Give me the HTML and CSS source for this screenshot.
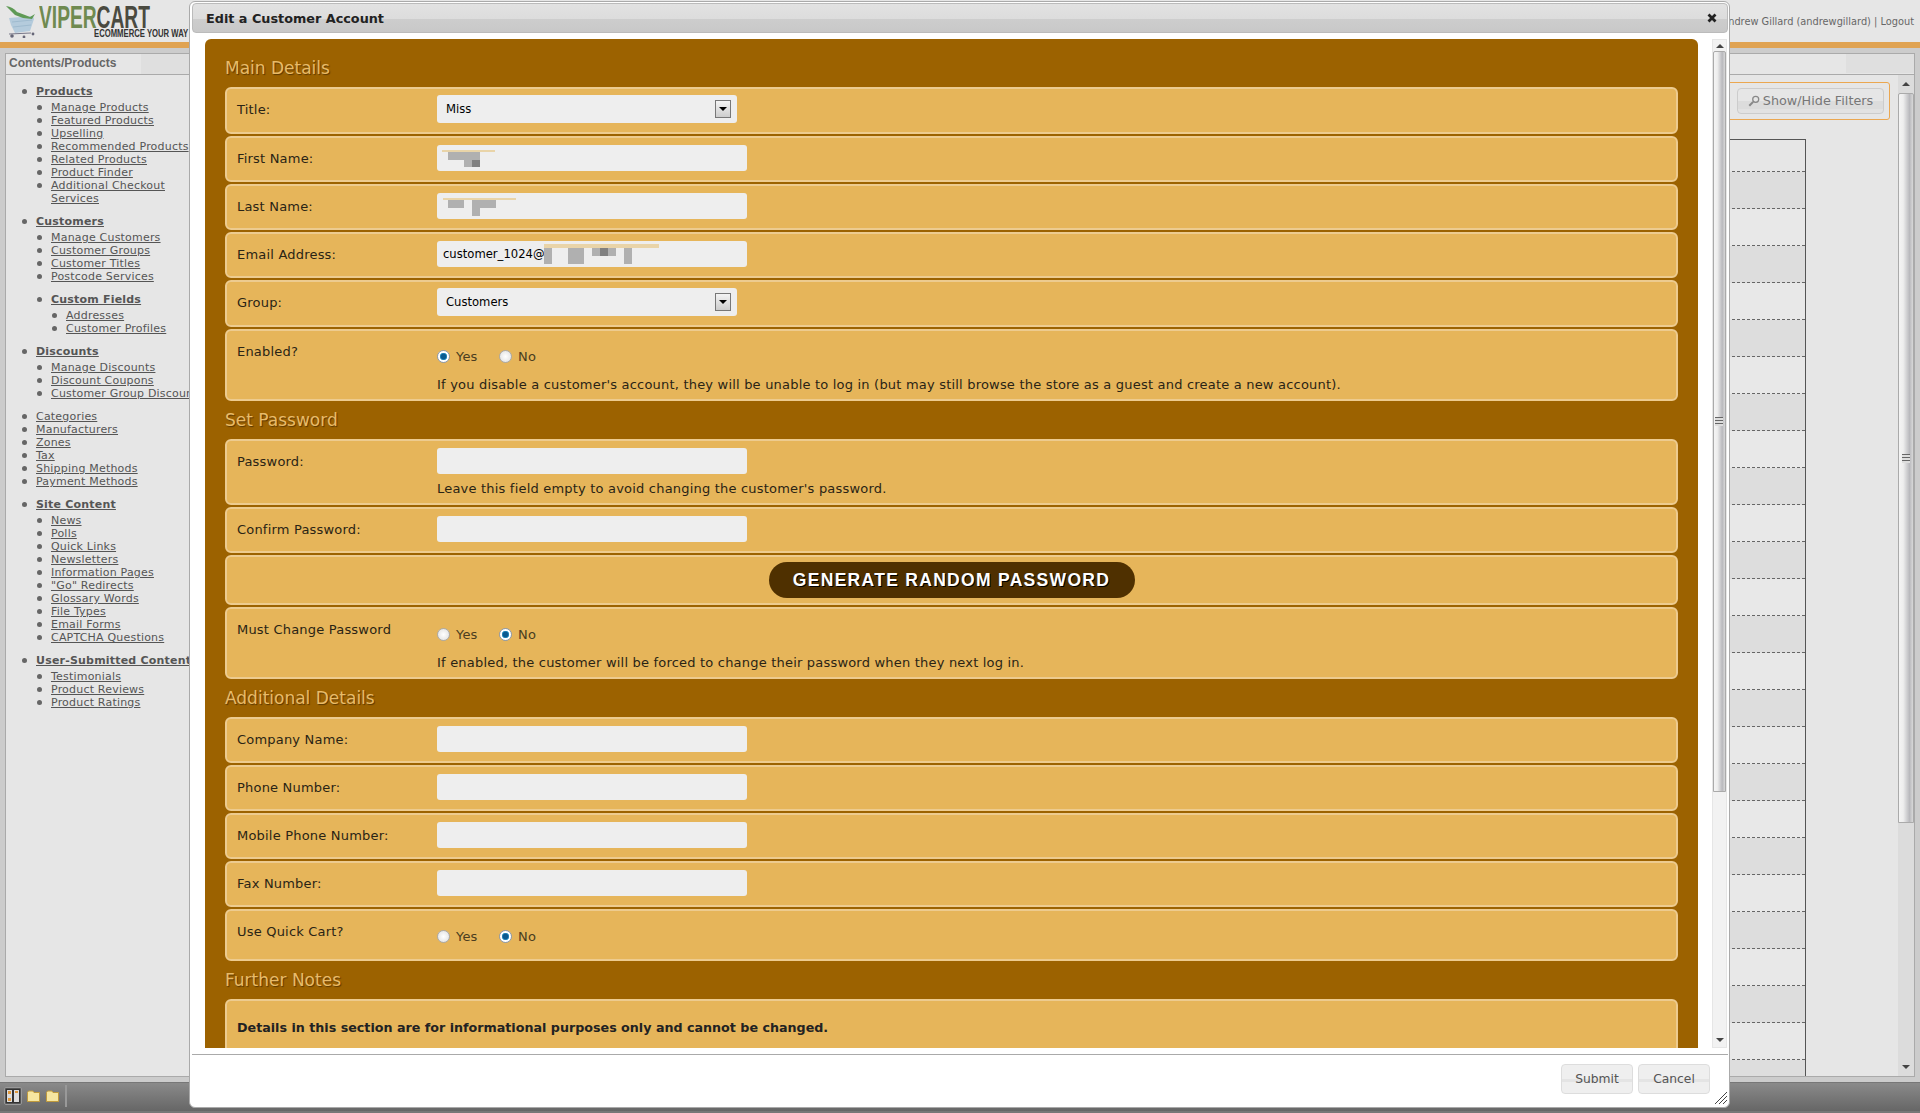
FILE: index.html
```html
<!DOCTYPE html>
<html lang="en">
<head>
<meta charset="utf-8">
<title>Edit a Customer Account</title>
<link rel="stylesheet" href="styles.css">
</head>
<body>
<header class="top">
  <div class="logo">
    <svg class="cart" width="31" height="33" viewBox="0 0 31 33">
      <path d="M4 13 L28 11 L29 14 L25 26 L10 28 L6 20Z" fill="#b4cbdc"/>
      <path d="M7 17 L27 15 M8 22 L26 20" stroke="#9fbbcf" fill="none"/>
      <path d="M1 1 Q8 2 12 7 L20 10 L25 12 L30 9 L27 14 L18 13 L10 10 Q6 6 1 1Z" fill="#5f9a55"/>
      <path d="M4 29 L26 28" stroke="#778" stroke-width="1.2"/>
      <circle cx="7" cy="31" r="1.8" fill="#667"/><circle cx="19" cy="32" r="1.4" fill="#667"/><circle cx="28" cy="29" r="1.4" fill="#667"/>
    </svg>
    <div class="wordmark">
      <div class="brand"><span class="brand-a">VIPER</span><span class="brand-b">CART</span></div>
      <div class="tag">ECOMMERCE YOUR WAY</div>
    </div>
  </div>
  <div class="user">Andrew Gillard (andrewgillard) | Logout</div>
</header>
<div class="stripe"></div>
<main class="work">
  <aside class="side">
    <div class="tabs"><div class="tab">Contents/Products</div></div>
    <nav class="nav">
      <ul class="l1">
        <li class="grp"><a class="b" href="#">Products</a>
          <ul class="l2">
            <li><a href="#">Manage Products</a></li><li><a href="#">Featured Products</a></li><li><a href="#">Upselling</a></li><li><a href="#">Recommended Products</a></li><li><a href="#">Related Products</a></li><li><a href="#">Product Finder</a></li><li><a href="#">Additional Checkout Services</a></li>
          </ul>
        </li>
        <li class="grp"><a class="b" href="#">Customers</a>
          <ul class="l2">
            <li><a href="#">Manage Customers</a></li><li><a href="#">Customer Groups</a></li><li><a href="#">Customer Titles</a></li><li><a href="#">Postcode Services</a></li>
            <li class="nest"><a class="b" href="#">Custom Fields</a>
              <ul class="l2"><li><a href="#">Addresses</a></li><li><a href="#">Customer Profiles</a></li></ul>
            </li>
          </ul>
        </li>
        <li class="grp"><a class="b" href="#">Discounts</a>
          <ul class="l2"><li><a href="#">Manage Discounts</a></li><li><a href="#">Discount Coupons</a></li><li><a href="#">Customer Group Discounts</a></li></ul>
        </li>
        <li><a href="#">Categories</a></li><li><a href="#">Manufacturers</a></li><li><a href="#">Zones</a></li><li><a href="#">Tax</a></li><li><a href="#">Shipping Methods</a></li>
        <li class="grp"><a href="#">Payment Methods</a></li>
        <li class="grp"><a class="b" href="#">Site Content</a>
          <ul class="l2"><li><a href="#">News</a></li><li><a href="#">Polls</a></li><li><a href="#">Quick Links</a></li><li><a href="#">Newsletters</a></li><li><a href="#">Information Pages</a></li><li><a href="#">"Go" Redirects</a></li><li><a href="#">Glossary Words</a></li><li><a href="#">File Types</a></li><li><a href="#">Email Forms</a></li><li><a href="#">CAPTCHA Questions</a></li></ul>
        </li>
        <li class="grp"><a class="b" href="#">User-Submitted Content</a>
          <ul class="l2"><li><a href="#">Testimonials</a></li><li><a href="#">Product Reviews</a></li><li><a href="#">Product Ratings</a></li></ul>
        </li>
      </ul>
    </nav>
  </aside>
  <section class="main">
    <div class="tabs tabs-main"><div class="tab-end"></div></div>
    <div class="main-body">
      <div class="main-content">
        <div class="filterbox"><button class="filterbtn" type="button">
          <svg width="12" height="12" viewBox="0 0 14 14"><circle cx="9" cy="5" r="3.5" fill="none" stroke="#888" stroke-width="1.5"/><path d="M6 8 L1.5 12.5" stroke="#888" stroke-width="2.4"/></svg>
          Show/Hide Filters</button></div>
        <div class="grid">
          <div class="grid-head"></div>
          <div class="r"></div><div class="r"></div><div class="r"></div><div class="r"></div><div class="r"></div><div class="r"></div><div class="r"></div><div class="r"></div><div class="r"></div><div class="r"></div><div class="r"></div><div class="r"></div><div class="r"></div><div class="r"></div><div class="r"></div><div class="r"></div><div class="r"></div><div class="r"></div><div class="r"></div><div class="r"></div><div class="r"></div><div class="r"></div><div class="r"></div><div class="r"></div><div class="r"></div>
        </div>
      </div>
      <div class="sb sb-page">
        <div class="sb-up"></div>
        <div class="sb-thumb sb-thumb-page"><span class="grip"></span></div>
        <div class="sb-down"></div>
      </div>
    </div>
  </section>
</main>
<footer class="taskbar">
  <div class="layout-ico"><svg width="14" height="14" viewBox="0 0 14 14"><rect x=".5" y=".5" width="6" height="13" fill="#ddd" stroke="#333"/><rect x="7.5" y=".5" width="6" height="13" fill="#ddd" stroke="#333"/><rect x="2" y="2" width="3" height="3" fill="#e0983a"/><rect x="2" y="9" width="3" height="3" fill="#e0983a"/><rect x="9" y="2" width="3" height="2" fill="#e0983a"/></svg></div>
  <svg class="folder" width="13" height="12" viewBox="0 0 13 12"><path d="M.5 2.5 L1.5 1 H6 L7 2.5 H12.5 V11.5 H.5Z" fill="#f6e6a0" stroke="#c09a3c"/></svg>
  <svg class="folder" width="13" height="12" viewBox="0 0 13 12"><path d="M.5 2.5 L1.5 1 H6 L7 2.5 H12.5 V11.5 H.5Z" fill="#f6e6a0" stroke="#c09a3c"/></svg>
  <div class="task-sep"></div>
</footer>

<div class="modal" role="dialog">
  <div class="m-title"><span>Edit a Customer Account</span>
    <svg width="10" height="10" viewBox="0 0 10 10"><path d="M1.5 1.5 L8.5 8.5 M8.5 1.5 L1.5 8.5" stroke="#222" stroke-width="2.8"/></svg>
  </div>
  <div class="m-body">
    <div class="panel">
      <h2 class="sec first">Main Details</h2>
      <div class="row sel-row"><label>Title:</label><div class="selwrap"><select><option>Miss</option></select><span class="selbtn"></span></div></div>
      <div class="row"><label>First Name:</label><div class="fld"><input type="text"><svg class="mask" width="120" height="26"><rect x="5" y="5" width="53" height="2" fill="#e9d4a8"/><rect x="11" y="7" width="32" height="8" fill="#b0b0b0"/><rect x="27" y="15" width="16" height="7" fill="#b0b0b0"/><rect x="35" y="15" width="8" height="7" fill="#808080"/></svg></div></div>
      <div class="row"><label>Last Name:</label><div class="fld"><input type="text"><svg class="mask" width="120" height="26"><rect x="6" y="5" width="73" height="2" fill="#e9d4a8"/><rect x="11" y="7" width="16" height="8" fill="#b0b0b0"/><rect x="35" y="7" width="24" height="8" fill="#b0b0b0"/><rect x="35" y="15" width="8" height="8" fill="#b0b0b0"/></svg></div></div>
      <div class="row"><label>Email Address:</label><div class="fld"><input type="text" value="customer_1024@"><svg class="mask" width="240" height="26"><rect x="107" y="3" width="115" height="4" fill="#e9d4a8"/><rect x="107" y="7" width="8" height="16" fill="#b0b0b0"/><rect x="131" y="7" width="16" height="16" fill="#b0b0b0"/><rect x="155" y="7" width="24" height="8" fill="#b0b0b0"/><rect x="163" y="7" width="8" height="8" fill="#808080"/><rect x="187" y="7" width="8" height="16" fill="#b0b0b0"/></svg></div></div>
      <div class="row sel-row"><label>Group:</label><div class="selwrap"><select><option>Customers</option></select><span class="selbtn"></span></div></div>
      <div class="row stack"><label>Enabled?</label><div class="ctl">
        <div class="radios"><label class="opt"><input class="radio" type="radio" name="en" checked>Yes</label><label class="opt"><input class="radio" type="radio" name="en">No</label></div>
        <p class="desc desc-r">If you disable a customer's account, they will be unable to log in (but may still browse the store as a guest and create a new account).</p>
      </div></div>

      <h2 class="sec">Set Password</h2>
      <div class="row stack"><label>Password:</label><div class="ctl"><input type="password"><p class="desc">Leave this field empty to avoid changing the customer's password.</p></div></div>
      <div class="row"><label>Confirm Password:</label><div class="fld"><input type="password"></div></div>
      <div class="row gen"><button class="genbtn" type="button">GENERATE RANDOM PASSWORD</button></div>
      <div class="row stack"><label>Must Change Password</label><div class="ctl">
        <div class="radios"><label class="opt"><input class="radio" type="radio" name="mc">Yes</label><label class="opt"><input class="radio" type="radio" name="mc" checked>No</label></div>
        <p class="desc desc-r">If enabled, the customer will be forced to change their password when they next log in.</p>
      </div></div>

      <h2 class="sec">Additional Details</h2>
      <div class="row"><label>Company Name:</label><div class="fld"><input type="text"></div></div>
      <div class="row"><label>Phone Number:</label><div class="fld"><input type="text"></div></div>
      <div class="row"><label>Mobile Phone Number:</label><div class="fld"><input type="text"></div></div>
      <div class="row"><label>Fax Number:</label><div class="fld"><input type="text"></div></div>
      <div class="row stack"><label>Use Quick Cart?</label><div class="ctl">
        <div class="radios radios-last"><label class="opt"><input class="radio" type="radio" name="qc">Yes</label><label class="opt"><input class="radio" type="radio" name="qc" checked>No</label></div>
      </div></div>

      <h2 class="sec">Further Notes</h2>
      <div class="row note"><strong>Details in this section are for informational purposes only and cannot be changed.</strong></div>
    </div>
    <div class="sb sb-modal">
      <div class="sb-up"></div>
      <div class="sb-thumb sb-thumb-modal"><span class="grip"></span></div>
      <div class="sb-down"></div>
    </div>
  </div>
  <div class="m-foot">
    <button class="btn" type="button">Submit</button><button class="btn" type="button">Cancel</button>
    <svg class="resize" width="12" height="12" viewBox="0 0 12 12"><path d="M0 12 L12 0 M4 12 L12 4 M8 12 L12 8" stroke="#444" fill="none"/></svg>
  </div>
</div>
</body>
</html>
```
FILE: styles.css
```css
* { box-sizing: border-box; }
html, body { margin: 0; height: 100%; }
body {
  height: 1113px; overflow: hidden; display: flex; flex-direction: column;
  background: #ccc; font: 11px/13px "DejaVu Sans", Verdana, sans-serif; color: #555;
}
a { color: #555; }

/* page header */
.top { height: 42px; background: #e6e6e6; display: flex; justify-content: space-between; flex: none; }
.logo { display: flex; padding: 5px 0 0 5px; width: 190px; }
.wordmark { margin-left: 3px; width: 150px; }
.brand {
  font: bold 32px/24px "Liberation Sans", Arial, sans-serif; transform: scaleX(.6); transform-origin: 0 0;
  white-space: nowrap; width: 190px; height: 24px; overflow: visible;
}
.brand-a { color: #6f8a50; }
.brand-b { color: #4a4a40; }
.tag {
  font: bold 11px/9px "Liberation Sans", Arial, sans-serif; color: #333; white-space: nowrap;
  margin: 0 0 0 55px; transform: scaleX(.7); transform-origin: 0 0;
}
.user { padding: 16px 6px 0 0; color: #666; font-size: 9.8px; line-height: 12px; }
.stripe { height: 6px; background: #e0a352; flex: none; }

/* workspace */
.work { flex: 1; display: flex; padding: 5px; min-height: 0; }
.side, .main { background: #e6e6e6; border: 1px solid #aaa; overflow: hidden; }
.side { width: 250px; flex: none; }
.main { flex: 1; display: flex; flex-direction: column; }
.tabs { height: 21px; background: #dfdfdf; border-bottom: 1px solid #aaa; flex: none; display: flex; }
.tab { width: 135px; background: #e6e6e6; padding: 3px 0 0 3px; font: bold 12px/13px "Liberation Sans", Arial, sans-serif; color: #666; }
.tabs-main { background: #e6e6e6; justify-content: flex-end; }
.tab-end { width: 68px; background: #dfdfdf; height: 19px; }

/* navigation */
.nav { padding: 10px 0 0; }
.nav ul { list-style: none; margin: 0; padding: 0; }
.l1 > li, .l2 > li { position: relative; white-space: nowrap; }
.l1 > li { padding-left: 30px; }
.nav .l2 { margin-top: 3px; }
.l2 > li { padding-left: 15px; white-space: normal; width: 172px; }
.l2 .l2 > li { width: 160px; }
.nav li::before {
  content: ""; position: absolute; width: 5px; height: 5px; border-radius: 50%; background: #666; top: 4px; left: 0;
}
.l1 > li::before { left: 16px; }
.l2 > li::before { left: 1px; }
.grp { margin-bottom: 10px; }
.nest { margin-top: 10px; }
.b { font-weight: bold; }
.nav a { letter-spacing: .2px; }

/* page main area */
.main-body { flex: 1; display: flex; min-height: 0; }
.main-content { flex: 1; min-width: 0; padding: 7px 8px 0 0; display: flex; flex-direction: column; align-items: flex-end; }
.filterbox { width: 100%; height: 38px; border: 1px solid #eba750; border-radius: 3px; padding: 5px 5px 0 0; display: flex; justify-content: flex-end; flex: none; }
.filterbtn {
  width: 147px; height: 26px; border: 1px solid #ccc; border-radius: 4px; padding: 0 0 1px; color: #777;
  background: linear-gradient(#e6e6e6 50%, #dcdcdc 50%, #dcdcdc 85%, #e2e2e2 85%);
  font: 12.8px "DejaVu Sans", Verdana, sans-serif; display: flex; align-items: center; justify-content: center; gap: 3px;
}
.grid { width: 1100px; flex: 1; margin: 19px 84px 0 0; border: solid #555; border-width: 1px 1px 0; overflow: hidden; }
.grid-head { height: 32px; border-bottom: 1px dashed #666; }
.r { height: 37px; border-bottom: 1px dashed #666; background: #ddd; }
.r:nth-child(odd) { background: #e8e8e8; }

/* scrollbars */
.sb { width: 15px; flex: none; display: flex; flex-direction: column; }
.sb-page { background: #dcdcdc; width: 16px; }
.sb-modal { background: #f2f2f2; border: 1px solid #e6e6e6; }
.sb-up, .sb-down { height: 18px; flex: none; display: flex; justify-content: center; align-items: center; }
.sb-modal .sb-up { height: 11px; }
.sb-modal .sb-down { height: 15px; }
.sb-up::after { content: ""; border: 4px solid transparent; border-top: 0; border-bottom: 4px solid #444; }
.sb-down { margin-top: auto; }
.sb-down::after { content: ""; border: 4px solid transparent; border-bottom: 0; border-top: 4px solid #444; }
.sb-thumb {
  background: linear-gradient(90deg, #f4f4f4, #eee 30%, #b9b9bd 75%, #d8d8d8); border: 1px solid #aaa; border-radius: 2px 2px 0 0;
  display: flex; align-items: center; justify-content: center; flex: none;
}
.sb-thumb-page { height: 730px; }
.sb-thumb-modal { height: 741px; }
.grip { width: 8px; height: 9px; background: repeating-linear-gradient(#666 0 1px, #ddd 1px 3px); margin-right: 1px; }

/* taskbar */
.taskbar {
  height: 31px; flex: none; display: flex; align-items: center; padding: 0 0 2px 4px; gap: 6px;
  background: linear-gradient(#8a8a8a, #666); border-top: 1px solid #777; border-bottom: 2px solid #777;
}
.layout-ico { width: 18px; height: 18px; border: 1px solid #999; border-radius: 2px; background: #555; display: flex; align-items: center; justify-content: center; margin-right: -1px; }
.task-sep { width: 2px; height: 22px; background: #999; }

/* modal */
.modal {
  position: absolute; left: 189px; top: 1px; width: 1541px; height: 1107px; background: #fff;
  border: 1px solid #aaa; border-radius: 6px; padding: 1px 1px 0 2px; display: flex; flex-direction: column;
}
.m-title {
  height: 30px; flex: none; border: 1px solid #bbb; border-radius: 4px; display: flex; justify-content: space-between; align-items: center;
  padding: 0 10px 0 13px; background: linear-gradient(#e2e2e2, #dcdcdc 55%, #cdcdcd 55%, #c8c8c8);
  font: bold 12.8px "DejaVu Sans", Verdana, sans-serif; color: #222;
}
.m-body { flex: 1; min-height: 0; display: flex; justify-content: space-between; padding: 6px 1px 6px 13px; }
.panel { width: 1493px; background: #9c6200; border-radius: 6px 6px 0 0; padding: 0 20px; overflow: hidden; }
.sec {
  margin: 0; height: 36px; font: normal 17px/35px "DejaVu Sans", Verdana, sans-serif; color: #e9bb68;
  text-shadow: 1px 1px 1px #5a3800;
}
.sec.first { height: 48px; line-height: 58px; }
.row {
  background: #e6b55a; border: 2px solid #edcb8f; border-radius: 6px; margin-bottom: 2px; padding: 7px 10px 9px;
  display: flex; align-items: center; color: #2a2415; font-size: 13px; letter-spacing: .2px;
}
.row > label { width: 200px; flex: none; }
.sel-row { padding-top: 6px; }
.stack { align-items: flex-start; padding-bottom: 8px; }
.stack > label { padding-top: 7px; }
.ctl { flex: 1; }
.fld { position: relative; width: 310px; height: 26px; }
.row input[type=text], .row input[type=password] {
  display: block; width: 310px; height: 26px; border: 0; border-radius: 3px; background: #eee; padding: 0 6px;
  font: 11.6px "DejaVu Sans", Verdana, sans-serif; color: #000;
}
.mask { position: absolute; left: 0; top: 0; }
.selwrap { position: relative; width: 300px; height: 28px; }
.selwrap select {
  appearance: none; width: 300px; height: 28px; border: 0; border-radius: 3px; background: #eee; padding: 0 9px;
  font: 11.6px "DejaVu Sans", Verdana, sans-serif; color: #000;
}
.selbtn {
  position: absolute; right: 6px; top: 5px; width: 16px; height: 18px; border: 1px solid #777;
  background: linear-gradient(#f4f4f4, #ccc); display: flex; align-items: center; justify-content: center;
}
.selbtn::after { content: ""; border: 4px solid transparent; border-bottom: 0; border-top: 4px solid #000; }
.radios { display: flex; margin-top: 12px; height: 13px; }
.radios-last { margin-bottom: 8px; }
.opt { display: flex; align-items: center; width: 62px; color: #4a3d20; }
.radio {
  appearance: none; margin: 0 6px 0 0; width: 13px; height: 13px; border-radius: 50%; border: 1px solid #aaa;
  background: radial-gradient(circle at 50% 50%, #fff, #ddd);
}
.radio:checked { background: radial-gradient(circle, #0a5a90 0 2.5px, #3aa0d0 3.5px, #fff 4px); border-color: #8a9ab0; }
.desc { margin: 8px 0 0; }
.desc-r { margin-top: 15px; }
.gen { justify-content: center; padding: 5px 0; }
.genbtn {
  width: 366px; height: 36px; border: 0; border-radius: 18px; background: #4f3000; color: #fff;
  font: bold 17.5px "Liberation Sans", Arial, sans-serif; letter-spacing: 1.3px; text-shadow: 1px 1px 0 #000; padding: 0;
}
.note { padding-top: 20px; height: 120px; align-items: flex-start; }
.note strong { color: #222; font-size: 12.7px; letter-spacing: 0; }

/* modal footer */
.m-foot { height: 53px; flex: none; border-top: 1px solid #aaa; display: flex; justify-content: flex-end; gap: 5px; padding: 9px 18px 0 0; position: relative; }
.btn {
  width: 72px; height: 30px; border: 1px solid #ddd; border-radius: 4px; padding: 0; color: #555;
  background: linear-gradient(#efefef 50%, #e4e4e4 50%, #e4e4e4 62%, #efefef 62%);
  font: 12.3px "DejaVu Sans", Verdana, sans-serif;
}
.resize { position: absolute; right: 1px; bottom: 3px; }
```
